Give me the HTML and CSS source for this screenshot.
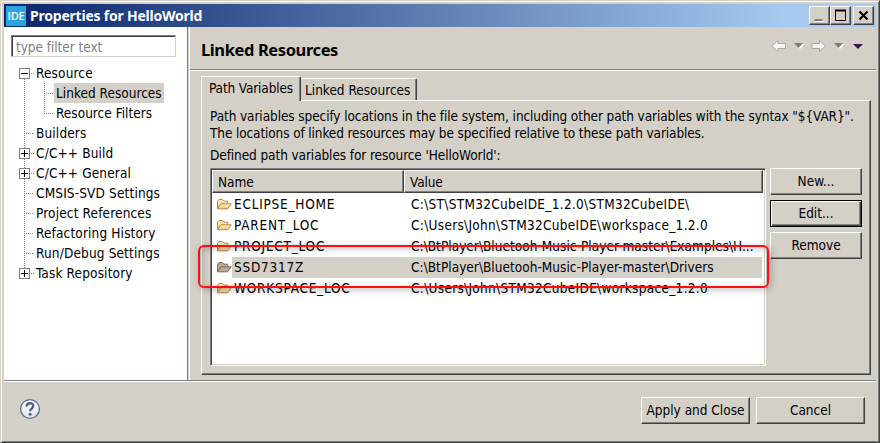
FILE: index.html
```
<!DOCTYPE html>
<html lang="en">
<head>
<meta charset="utf-8">
<title>Properties for HelloWorld</title>
<link rel="stylesheet" href="styles.css">
</head>
<body>
<svg class="defs" aria-hidden="true">
  <defs>
    <linearGradient id="fold" x1="0" y1="0" x2="0" y2="1"><stop offset="0" stop-color="#fff2c8"/><stop offset="1" stop-color="#f0c578"/></linearGradient>
    <linearGradient id="help" x1="0" y1="0" x2="0" y2="1"><stop offset="0" stop-color="#ffffff"/><stop offset="1" stop-color="#dfe2e6"/></linearGradient>
    <symbol id="folder" viewBox="0 0 16 16">
      <path class="back" d="M1.5 12.5V5.2L3 3.500h3.500L8 5.200h3.800v3"/>
      <path class="front" d="M1.500 12.800L5 7.800h10.300l-3.600 5z"/>
    </symbol>
  </defs>
</svg>
<div class="window">
  <header class="titlebar">
    <span class="app-icon">IDE</span>
    <h1 class="title">Properties for HelloWorld</h1>
    <div class="controls">
      <span class="ctl"><svg width="18" height="16"><path d="M5.500 14.500h8" stroke="#fff"/><path d="M4.500 13h8" stroke="#808080" stroke-width="2"/></svg></span>
      <span class="ctl"><svg width="18" height="16"><path d="M4.500 3v10.500h10V3" fill="none" stroke="#000"/><path d="M4 3.500h11" stroke="#000" stroke-width="2"/></svg></span>
      <span class="ctl close"><svg width="18" height="16"><path d="M5.500 4.500l8 8M13.500 4.500l-8 8" stroke="#000" stroke-width="2"/></svg></span>
    </div>
  </header>
  <div class="main">
    <aside class="side">
      <div class="filter">type filter text</div>
      <ul class="tree">
        <li class="row"><i class="box minus"></i><span class="label">Resource</span></li>
        <li class="row child"><i class="elbow"></i><span class="label selected">Linked Resources</span></li>
        <li class="row child last"><i class="elbow"></i><span class="label">Resource Filters</span></li>
        <li class="row"><i class="stub"></i><span class="label">Builders</span></li>
        <li class="row"><i class="box"></i><span class="label">C/C++ Build</span></li>
        <li class="row"><i class="box"></i><span class="label">C/C++ General</span></li>
        <li class="row"><i class="stub"></i><span class="label">CMSIS-SVD Settings</span></li>
        <li class="row"><i class="stub"></i><span class="label">Project References</span></li>
        <li class="row"><i class="stub"></i><span class="label">Refactoring History</span></li>
        <li class="row"><i class="stub"></i><span class="label">Run/Debug Settings</span></li>
        <li class="row end"><i class="box"></i><span class="label">Task Repository</span></li>
      </ul>
    </aside>
    <main class="content">
      <div class="heading">
        <h2>Linked Resources</h2>
        <svg class="nav" width="96" height="16" viewBox="0 0 96 16">
          <path class="arrow" d="M1 8l6-5.500v3h7.500v5H7v3z"/>
          <path d="M24 6h10l-5 5z" fill="#fff"/><path d="M23 5h9l-4.500 5z" fill="#808080"/>
          <path class="arrow" d="M54.500 8l-6-5.500v3H41v5h7.500v3z"/>
          <path d="M64 6h10l-5 5z" fill="#fff"/><path d="M63 5h9l-4.500 5z" fill="#808080"/>
          <path d="M82 6h10l-5 5z" fill="#33194f"/>
        </svg>
      </div>
      <div class="tabs">
        <span class="tab active">Path Variables</span>
        <span class="tab">Linked Resources</span>
      </div>
      <section class="page">
        <p class="intro"><span class="first">Path variables specify locations in the file system, including other path variables with the syntax "${VAR}".</span><br>The locations of linked resources may be specified relative to these path variables.</p>
        <p class="caption">Defined path variables for resource 'HelloWorld':</p>
        <div class="body">
          <div class="table">
            <div class="thead"><span class="th name">Name</span><span class="th value">Value</span></div>
            <div class="tr"><svg class="ico"><use href="#folder"/></svg><span class="td key">ECLIPSE_HOME</span><span class="td path">C:\ST\STM32CubeIDE_1.2.0\STM32CubeIDE\</span></div>
            <div class="tr"><svg class="ico"><use href="#folder"/></svg><span class="td key">PARENT_LOC</span><span class="td path">C:\Users\John\STM32CubeIDE\workspace_1.2.0</span></div>
            <div class="tr"><svg class="ico"><use href="#folder"/></svg><span class="td key">PROJECT_LOC</span><span class="td path tight">C:\BtPlayer\Bluetooh-Music-Player-master\Examples\H...</span></div>
            <div class="tr picked"><svg class="ico"><use href="#folder"/></svg><span class="td key">SSD7317Z</span><span class="td path tight">C:\BtPlayer\Bluetooh-Music-Player-master\Drivers</span></div>
            <div class="tr"><svg class="ico"><use href="#folder"/></svg><span class="td key">WORKSPACE_LOC</span><span class="td path">C:\Users\John\STM32CubeIDE\workspace_1.2.0</span></div>
            <div class="highlight"></div>
          </div>
          <div class="actions">
            <button class="btn">New...</button>
            <button class="btn default">Edit...</button>
            <button class="btn">Remove</button>
          </div>
        </div>
      </section>
    </main>
  </div>
  <footer class="footer">
    <svg class="help" width="22" height="22" viewBox="0 0 22 22"><circle cx="11" cy="11" r="9.400" fill="url(#help)" stroke="#526a94" stroke-width="1.300"/><path d="M7.500 8.600C7.600 4.200 14.300 4.300 14.300 8c0 2.600-3.200 2.500-3.200 5.200" fill="none" stroke="#4c618a" stroke-width="2.300"/><circle cx="11.100" cy="16.300" r="1.500" fill="#4c618a"/></svg>
    <button class="btn apply">Apply and Close</button>
    <button class="btn cancel">Cancel</button>
  </footer>
</div>
</body>
</html>
```
FILE: styles.css
```
* { box-sizing: border-box; }
body {
  margin: 0;
  font: 13.5px/17px "DejaVu Sans Condensed", "DejaVu Sans", sans-serif;
  color: #000;
  background: #d4d0c8;
  overflow: hidden;
}
h1, h2, p, ul { margin: 0; padding: 0; font-weight: normal; }
.defs { position: absolute; width: 0; height: 0; }

.window {
  display: flex;
  flex-direction: column;
  width: 880px;
  height: 443px;
  padding: 3px 2px 0 3px;
  background: #d4d0c8;
  border: solid;
  border-width: 1px;
  border-color: #d4d0c8 #404040 #404040 #d4d0c8;
  box-shadow: inset 1px 1px #fff, inset -1px -1px #808080;
}

.titlebar {
  display: flex;
  align-items: center;
  height: 23px;
  margin-right: 1px;
  padding: 0 2px;
  background: linear-gradient(90deg, #0a246a, #a6caf0 90%);
}
.app-icon {
  width: 20px;
  height: 20px;
  background: #2ba5de;
  color: #fff;
  font: 600 11px/19px "Open Sans", sans-serif;
  letter-spacing: -0.2px;
  text-align: center;
  overflow: hidden;
}
.title {
  flex: 1;
  margin-left: 4px;
  color: #fff;
  font: bold 14px/22px "Noto Sans", sans-serif;
  letter-spacing: -0.22px;
}
.controls { display: flex; }
.ctl, .btn {
  background: #d4d0c8;
  border: 1px solid;
  border-color: #fff #404040 #404040 #fff;
  box-shadow: inset -1px -1px #808080;
}
.ctl { width: 21px; height: 19px; }
.ctl svg { display: block; }
.close { margin-left: 2px; }

.main { display: flex; height: 353px; margin-right: 1px; }
.side {
  width: 184px;
  padding: 8px 0 0 7px;
  background: #fff;
  border-right: 1px solid #808080;
}
.filter {
  width: 165px;
  height: 22px;
  padding: 1px 4px;
  border: 1px solid;
  border-color: #808080 #d4d0c8 #d4d0c8 #808080;
  box-shadow: inset 1px 1px #404040;
  color: #808080;
  line-height: 20px;
  letter-spacing: -0.05px;
}
.tree { list-style: none; margin-top: 6px; }
.row {
  display: flex;
  align-items: center;
  height: 20px;
  margin-left: 8px;
  background: repeating-linear-gradient(180deg, #808080 0 1px, transparent 1px 2px) 5px 0 / 1px 100% no-repeat;
}
.row:first-child, .row.end { background-size: 1px 10px; }
.row:first-child { background-position: 5px 10px; }
.box, .stub {
  flex: none;
  width: 16px;
  height: 11px;
  background: repeating-linear-gradient(90deg, #808080 0 1px, transparent 1px 2px) 11px 5px / 4px 1px no-repeat;
}
.stub { background-position: 7px 5px; background-size: 8px 1px; }
.box {
  background:
    linear-gradient(#000, #000) 2px 5px / 7px 1px no-repeat,
    linear-gradient(#000, #000) 5px 2px / 1px 7px no-repeat,
    linear-gradient(#fff, #fff) 1px 1px / 9px 9px no-repeat,
    linear-gradient(#808080, #808080) 0 0 / 11px 11px no-repeat,
    repeating-linear-gradient(90deg, #808080 0 1px, transparent 1px 2px) 12px 5px / 4px 1px no-repeat;
}
.box.minus {
  background:
    linear-gradient(#000, #000) 2px 5px / 7px 1px no-repeat,
    linear-gradient(#fff, #fff) 1px 1px / 9px 9px no-repeat,
    linear-gradient(#808080, #808080) 0 0 / 11px 11px no-repeat,
    repeating-linear-gradient(90deg, #808080 0 1px, transparent 1px 2px) 12px 5px / 4px 1px no-repeat;
}
.elbow {
  flex: none;
  width: 10px;
  height: 20px;
  margin-left: 25px;
  background:
    repeating-linear-gradient(180deg, #808080 0 1px, transparent 1px 2px) 0 0 / 1px 100% no-repeat,
    repeating-linear-gradient(90deg, #808080 0 1px, transparent 1px 2px) 0 10px / 9px 1px no-repeat;
}
.last .elbow { background-size: 1px 10px, 9px 1px; }
.label { height: 20px; padding: 0 1px 0 1px; line-height: 20px; letter-spacing: 0.15px; white-space: nowrap; }
.child .label { padding: 0 2px; letter-spacing: 0.02px; }
.selected { background: #d4d0c8; }

.content {
  flex: 1;
  display: flex;
  flex-direction: column;
  margin-left: 1px;
  border-left: 1px solid #fff;
}
.heading {
  display: flex;
  justify-content: space-between;
  height: 44px;
  padding: 11px 9px 0 11px;
  border-bottom: 1px solid #fff;
  box-shadow: inset 0 -1px #808080;
}
.heading h2 {
  font: bold 16.5px/24px "Noto Sans", sans-serif;
  letter-spacing: -0.4px;
}
.nav { display: block; }
.arrow { fill: #f7f7f5; stroke: #a8aaa8; stroke-linejoin: round; }

.tabs { display: flex; align-items: flex-end; height: 29px; padding-left: 11px; }
.tab {
  width: 116px;
  height: 22px;
  padding-left: 3px;
  border: 1px solid;
  border-color: #fff #404040 transparent transparent;
  border-bottom: 0;
  border-radius: 0 2px 0 0;
  box-shadow: inset -1px 0 #808080;
  line-height: 22px;
  white-space: nowrap;
}
.tab.active {
  z-index: 1;
  width: 100px;
  height: 25px;
  margin-bottom: -1px;
  padding-left: 7px;
  background: #d4d0c8;
  border-left-color: #fff;
  border-radius: 2px 2px 0 0;
  line-height: 22px;
  letter-spacing: -0.13px;
}
.page {
  height: 275px;
  margin: 0 5px 0 11px;
  padding: 7px 8px 0 8px;
  border: 1px solid;
  border-color: #fff #404040 #404040 #fff;
  box-shadow: inset -1px -1px #808080;
}
.intro, .caption { white-space: nowrap; }
.intro { letter-spacing: -0.12px; }
.first { letter-spacing: -0.09px; }
.caption { margin-top: 5px; letter-spacing: -0.09px; }
.body { display: flex; gap: 4px; margin-top: 4px; }
.table {
  position: relative;
  width: 556px;
  height: 198px;
  padding: 1px;
  background: #fff;
  border: 1px solid;
  border-color: #808080 #fff #fff #808080;
  box-shadow: inset 1px 1px #404040, inset -1px -1px #d4d0c8;
}
.thead { display: flex; height: 23px; margin-right: 1px; background: #d4d0c8; }
.th {
  padding-left: 5px;
  border: 1px solid;
  border-color: #fff #404040 #404040 #fff;
  box-shadow: inset -1px -1px #808080;
  line-height: 23px;
}
.name { width: 192px; }
.value { flex: 1; letter-spacing: -0.1px; }
.tr { display: flex; height: 21px; padding-left: 4px; line-height: 23px; }
.ico { width: 16px; height: 16px; margin-top: 3px; fill: url(#fold); stroke: #bd8744; stroke-width: 1; }
.td { height: 22px; white-space: nowrap; }
.key { width: 176px; padding-left: 2px; letter-spacing: 0.75px; }
.path { width: 354px; padding-left: 3px; letter-spacing: 0.3px; }
.tight { letter-spacing: 0.03px; }
.picked .td { height: 21px; margin-top: 1px; line-height: 21px; background: #d4d0c8; }
.picked .ico { fill: #b5aa96; stroke: #806b54; }
.highlight {
  position: absolute;
  left: -13px;
  top: 76px;
  width: 571px;
  height: 43px;
  border: 2px solid #fb0f0f;
  border-radius: 6px;
  box-shadow: 2px 2px 7px rgba(0, 0, 0, 0.25), inset 2px 2px 7px rgba(0, 0, 0, 0.22);
}
.actions { display: flex; flex-direction: column; gap: 5px; }
.btn {
  flex: none;
  width: 92px;
  height: 27px;
  padding: 0 0 2px;
  font: inherit;
  line-height: 22px;
  text-align: center;
}
.default {
  border-color: #000;
  box-shadow: inset 1px 1px #fff, inset -1px -1px #404040, inset -2px -2px #808080;
}

.footer {
  display: flex;
  height: 60px;
  margin-right: 1px;
  padding: 16px 11px 0 15px;
  border-top: 1px solid #808080;
  box-shadow: inset 0 1px #fff;
}
.help { margin: 1px auto 0 0; }
.apply { width: 109px; margin-right: 6px; }
.cancel { width: 109px; }
```
